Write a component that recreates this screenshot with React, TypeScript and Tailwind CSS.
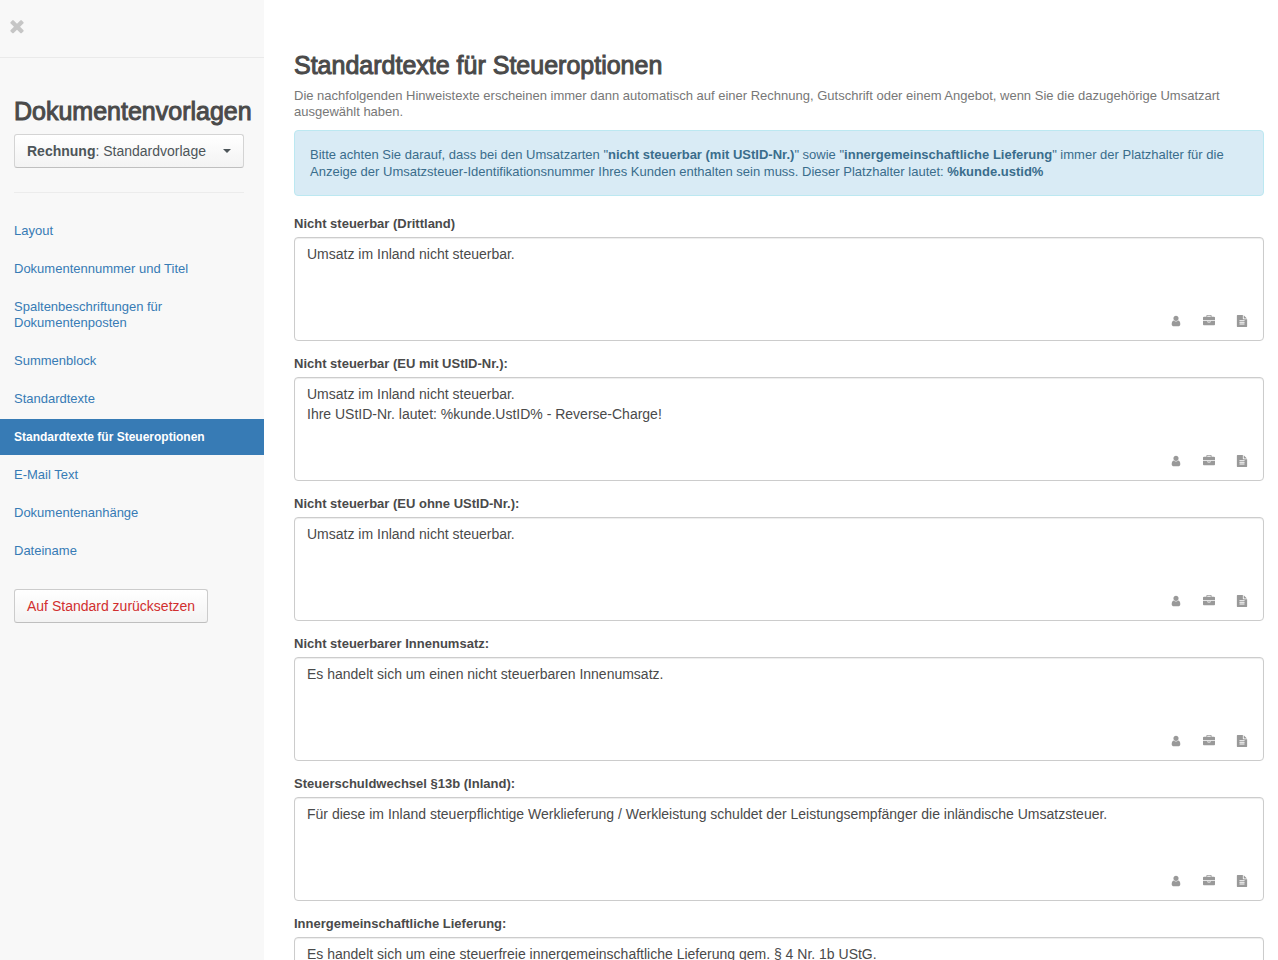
import { useState } from "react"

const icons = {
  times:
    "M1490 1322q0 40-28 68l-136 136q-28 28-68 28t-68-28l-294-294-294 294q-28 28-68 28t-68-28l-136-136q-28-28-28-68t28-68l294-294-294-294q-28-28-28-68t28-68l136-136q28-28 68-28t68 28l294 294 294-294q28-28 68-28t68 28l136 136q28 28 28 68t-28 68l-294 294 294 294q28 28 28 68z",
  user: "M1536 1399q0 109-62.5 187t-150.5 78h-854q-88 0-150.5-78t-62.5-187q0-85 8.5-160.5t31.5-152 58.5-131 94-89 134.5-34.5q131 128 313 128t313-128q76 0 134.5 34.5t94 89 58.5 131 31.5 152 8.5 160.5zm-256-887q0 159-112.5 271.5t-271.5 112.5-271.5-112.5-112.5-271.5 112.5-271.5 271.5-112.5 271.5 112.5 112.5 271.5z",
  briefcase:
    "M640 256h512v-128h-512v128zm1152 640v480q0 66-47 113t-113 47h-1472q-66 0-113-47t-47-113v-480h672v160q0 26 19 45t45 19h320q26 0 45-19t19-45v-160h672zm-768 0v128h-256v-128h256zm768-480v384h-1792v-384q0-66 47-113t113-47h352v-160q0-40 28-68t68-28h576q40 0 68 28t28 68v160h352q66 0 113 47t47 113z",
  file: "M1596 476q14 14 28 36h-472v-472q22 14 36 28zm-476 164h544v1056q0 40-28 68t-68 28h-1344q-40 0-68-28t-28-68v-1600q0-40 28-68t68-28h800v544q0 40 28 68t68 28zm160 736v-64q0-14-9-23t-23-9h-704q-14 0-23 9t-9 23v64q0 14 9 23t23 9h704q14 0 23-9t9-23zm0-256v-64q0-14-9-23t-23-9h-704q-14 0-23 9t-9 23v64q0 14 9 23t23 9h704q14 0 23-9t9-23zm0-256v-64q0-14-9-23t-23-9h-704q-14 0-23 9t-9 23v64q0 14 9 23t23 9h704q14 0 23-9t9-23z",
}

function Icon({ name, className }: { name: keyof typeof icons; className: string }) {
  return (
    <svg viewBox="0 0 1792 1792" fill="currentColor" aria-hidden="true" className={className}>
      <path d={icons[name]} />
    </svg>
  )
}

const navItems = [
  "Layout",
  "Dokumentennummer und Titel",
  "Spaltenbeschriftungen für Dokumentenposten",
  "Summenblock",
  "Standardtexte",
  "Standardtexte für Steueroptionen",
  "E-Mail Text",
  "Dokumentenanhänge",
  "Dateiname",
]

const fields = [
  {
    id: "drittland",
    label: "Nicht steuerbar (Drittland)",
    text: "Umsatz im Inland nicht steuerbar.",
  },
  {
    id: "eu-mit",
    label: "Nicht steuerbar (EU mit UStID-Nr.):",
    text: "Umsatz im Inland nicht steuerbar.\nIhre UStID-Nr. lautet: %kunde.UstID% - Reverse-Charge!",
  },
  {
    id: "eu-ohne",
    label: "Nicht steuerbar (EU ohne UStID-Nr.):",
    text: "Umsatz im Inland nicht steuerbar.",
  },
  {
    id: "innenumsatz",
    label: "Nicht steuerbarer Innenumsatz:",
    text: "Es handelt sich um einen nicht steuerbaren Innenumsatz.",
  },
  {
    id: "paragraph-13b",
    label: "Steuerschuldwechsel §13b (Inland):",
    text: "Für diese im Inland steuerpflichtige Werklieferung / Werkleistung schuldet der Leistungsempfänger die inländische Umsatzsteuer.",
  },
  {
    id: "lieferung",
    label: "Innergemeinschaftliche Lieferung:",
    text: "Es handelt sich um eine steuerfreie innergemeinschaftliche Lieferung gem. § 4 Nr. 1b UStG.",
  },
]

const placeholders = [
  { icon: "user", label: "Kunde" },
  { icon: "briefcase", label: "Firma" },
  { icon: "file", label: "Dokument" },
] as const

// medium weight: regular letters with a thin outline
const headingClass =
  "text-[25px] leading-8 font-normal whitespace-nowrap text-[#4a4a4a] [-webkit-text-stroke:1px_#4a4a4a]"

function Sidebar() {
  const [active, setActive] = useState("Standardtexte für Steueroptionen")

  return (
    <aside className="w-[264px] shrink-0 bg-[#f8f8f8]">
      <div className="flex h-[58px] items-center border-b border-[#eaeaea] px-[7px]">
        <button type="button" aria-label="Schließen" className="text-[#c6c6c6]">
          <Icon name="times" className="-mt-1.5 size-5" />
        </button>
      </div>

      <div className="px-3.5 pt-[37px]">
        <h2 className={headingClass}>Dokumentenvorlagen</h2>
        <button
          type="button"
          aria-haspopup="menu"
          className="mt-[7px] flex h-[34px] w-[230px] items-center justify-between rounded-[3px] border border-[#d4d4d4] border-b-[#bfbfbf] bg-linear-to-b from-white to-[#f3f3f3] px-3 text-sm whitespace-nowrap text-[#4d5559]"
        >
          <span>
            <b>Rechnung</b>: Standardvorlage
          </span>
          <span className="border-x-4 border-t-4 border-x-transparent border-t-[#4d5559]" />
        </button>
        <hr className="mt-6 mr-1.5 border-[#ececec]" />
      </div>

      <nav className="mt-5 flex flex-col gap-0.5">
        {navItems.map((item) => (
          <a
            key={item}
            href="#"
            onClick={() => setActive(item)}
            className={
              item === active
                ? "bg-[#377bb5] px-3.5 py-2.5 text-xs leading-4 font-bold text-white"
                : "px-3.5 py-2.5 text-[13px] leading-4 text-[#377bb5]"
            }
          >
            {item}
          </a>
        ))}
      </nav>

      <button
        type="button"
        className="mt-5 ml-3.5 h-[34px] rounded-[3px] border border-[#cccccc] border-b-[#bfbfbf] bg-linear-to-b from-white to-[#f3f3f3] px-3 text-sm text-[#d12f2f]"
      >
        Auf Standard zurücksetzen
      </button>
    </aside>
  )
}

export default function App() {
  return (
    <div className="flex h-screen overflow-hidden bg-white font-['Liberation_Sans',Arial,sans-serif] text-[#4a4a4a]">
      <Sidebar />

      <main className="min-w-0 flex-1 overflow-hidden pt-[49px] pr-3.5 pl-[30px]">
        <h1 className={headingClass}>Standardtexte für Steueroptionen</h1>
        <p className="mt-[7px] text-[13px] leading-4 text-[#777777]">
          Die nachfolgenden Hinweistexte erscheinen immer dann automatisch auf einer Rechnung,
          Gutschrift oder einem Angebot, wenn Sie die dazugehörige Umsatzart ausgewählt haben.
        </p>

        <div className="mt-2.5 rounded-[4px] border border-[#bce8f1] bg-[#d9ebf5] p-[15px] text-[13px] leading-[17px] text-[#3a6d8c]">
          <p>
            Bitte achten Sie darauf, dass bei den Umsatzarten "<b>nicht steuerbar (mit UStID-Nr.)</b>"
            sowie "<b>innergemeinschaftliche Lieferung</b>" immer der Platzhalter für die Anzeige der
            Umsatzsteuer-Identifikationsnummer Ihres Kunden enthalten sein muss. Dieser Platzhalter
            lautet: <b>%kunde.ustid%</b>
          </p>
        </div>

        <form className="mt-5 flex flex-col gap-[15px]">
          {fields.map((field) => (
            <div key={field.id}>
              <label htmlFor={field.id} className="mb-[5px] block text-[13px] leading-4 font-bold">
                {field.label}
              </label>
              <div className="relative">
                <textarea
                  id={field.id}
                  defaultValue={field.text}
                  className="block h-[104px] w-full resize-none rounded-[4px] border border-[#cccccc] bg-white px-3 py-1.5 text-sm leading-5 shadow-[inset_0_1px_1px_rgba(0,0,0,0.075)]"
                />
                <div className="absolute right-4 bottom-[14px] flex gap-[21px] text-[#999999]">
                  {placeholders.map((placeholder) => (
                    <button key={placeholder.icon} type="button" aria-label={placeholder.label}>
                      <Icon name={placeholder.icon} className="size-3" />
                    </button>
                  ))}
                </div>
              </div>
            </div>
          ))}
        </form>
      </main>
    </div>
  )
}
